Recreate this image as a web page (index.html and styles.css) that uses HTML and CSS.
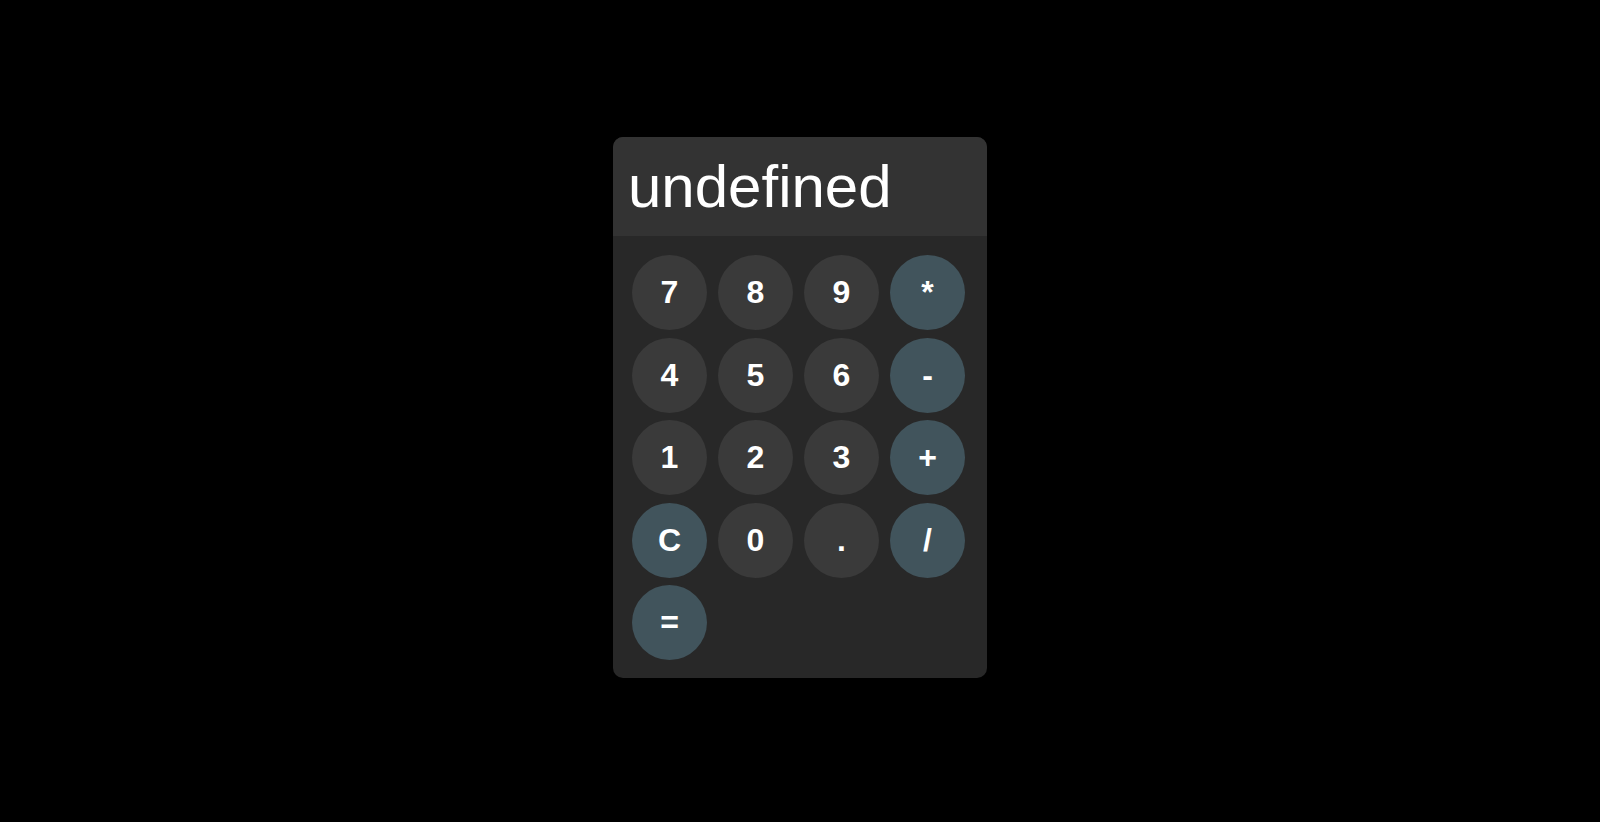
FILE: index.html
```html
<!DOCTYPE html>
<html lang="en">
<head>
<meta charset="utf-8">
<title>Calculator</title>
<link rel="stylesheet" href="styles.css">
</head>
<body>
<div class="calculator">
  <div class="display">undefined</div>
  <div class="keypad">
    <button class="key">7</button>
    <button class="key">8</button>
    <button class="key">9</button>
    <button class="key op">*</button>
    <button class="key">4</button>
    <button class="key">5</button>
    <button class="key">6</button>
    <button class="key op">-</button>
    <button class="key">1</button>
    <button class="key">2</button>
    <button class="key">3</button>
    <button class="key op">+</button>
    <button class="key op">C</button>
    <button class="key">0</button>
    <button class="key">.</button>
    <button class="key op">/</button>
    <button class="key op">=</button>
  </div>
</div>
</body>
</html>
```

FILE: styles.css
```css
html, body {
  margin: 0;
  padding: 0;
  background: #000;
  height: 100%;
}

body {
  display: flex;
  flex-direction: column;
  align-items: center;
  padding-top: 137px;
  box-sizing: border-box;
  font-family: "Liberation Sans", Arial, sans-serif;
  overflow: hidden;
}

.calculator {
  width: 374px;
  border-radius: 10px;
  overflow: hidden;
  background: #282828;
}

.display {
  height: 99px;
  box-sizing: border-box;
  padding: 15px 15px 0 15px;
  background: #333333;
  color: #ffffff;
  font-size: 60px;
  line-height: normal;
  white-space: nowrap;
}

.keypad {
  display: grid;
  grid-template-columns: repeat(4, 75px);
  column-gap: 11px;
  row-gap: 7.5px;
  padding: 19px 22px 18px 19px;
}

.key {
  width: 75px;
  height: 75px;
  border: none;
  border-radius: 50%;
  background: #3a3a3a;
  color: #ffffff;
  font-family: "Liberation Sans", Arial, sans-serif;
  font-weight: bold;
  font-size: 32px;
  padding: 0;
  margin: 0;
  display: flex;
  align-items: center;
  justify-content: center;
}

.key.op {
  background: #41545c;
}
```
